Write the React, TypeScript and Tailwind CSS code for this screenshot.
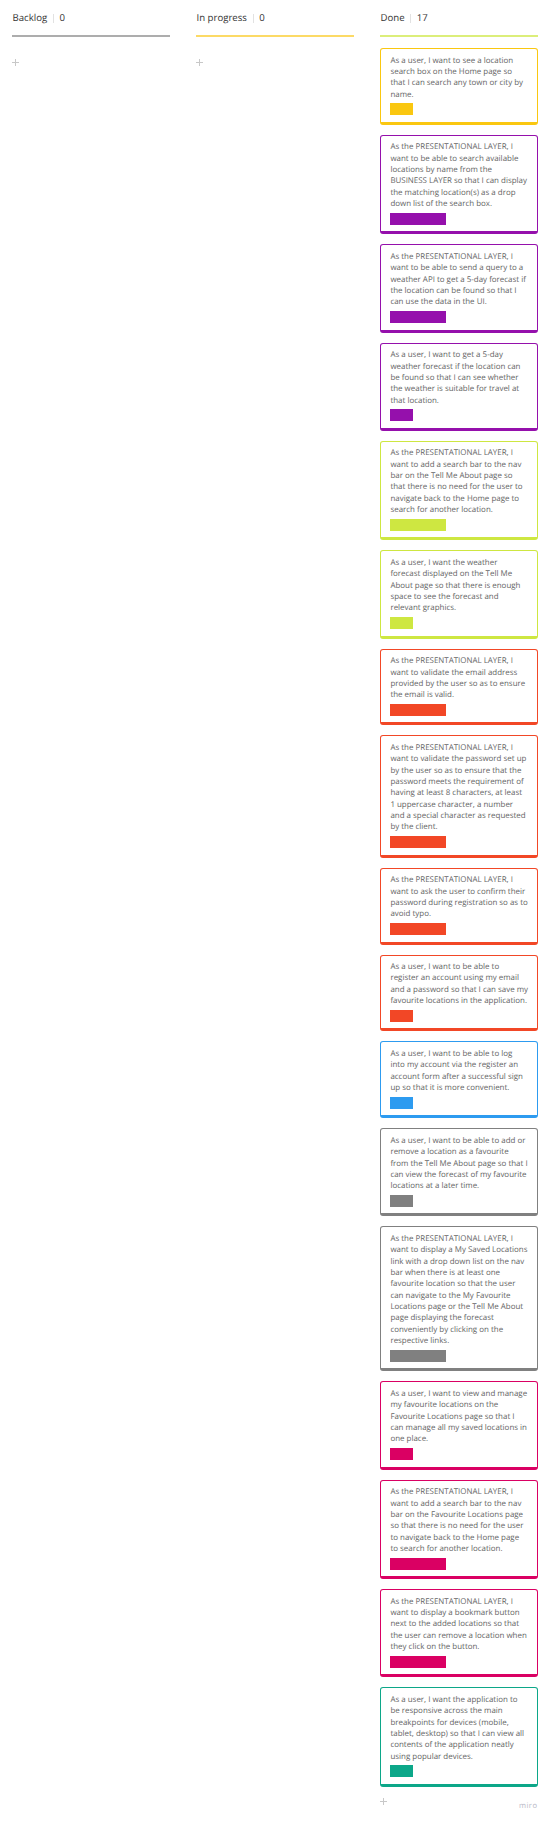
type Story = { color: string; wide?: boolean; lines: string[] };

const YELLOW = 'border-[#fac710] [--c:#fac710]';
const PURPLE = 'border-[#9510ac] [--c:#9510ac]';
const LIME = 'border-[#cee741] [--c:#cee741]';
const RED = 'border-[#f24726] [--c:#f24726]';
const BLUE = 'border-[#2d9bf0] [--c:#2d9bf0]';
const GRAY = 'border-[#808080] [--c:#808080]';
const PINK = 'border-[#da0063] [--c:#da0063]';
const GREEN = 'border-[#0ca789] [--c:#0ca789]';

const stories: Story[] = [
  { color: YELLOW, lines: ['As a user, I want to see a location', 'search box on the Home page so', 'that I can search any town or city by', 'name.'] },
  { color: PURPLE, wide: true, lines: ['As the PRESENTATIONAL LAYER, I', 'want to be able to search available', 'locations by name from the', 'BUSINESS LAYER so that I can display', 'the matching location(s) as a drop', 'down list of the search box.'] },
  { color: PURPLE, wide: true, lines: ['As the PRESENTATIONAL LAYER, I', 'want to be able to send a query to a', 'weather API to get a 5-day forecast if', 'the location can be found so that I', 'can use the data in the UI.'] },
  { color: PURPLE, lines: ['As a user, I want to get a 5-day', 'weather forecast if the location can', 'be found so that I can see whether', 'the weather is suitable for travel at', 'that location.'] },
  { color: LIME, wide: true, lines: ['As the PRESENTATIONAL LAYER, I', 'want to add a search bar to the nav', 'bar on the Tell Me About page so', 'that there is no need for the user to', 'navigate back to the Home page to', 'search for another location.'] },
  { color: LIME, lines: ['As a user, I want the weather', 'forecast displayed on the Tell Me', 'About page so that there is enough', 'space to see the forecast and', 'relevant graphics.'] },
  { color: RED, wide: true, lines: ['As the PRESENTATIONAL LAYER, I', 'want to validate the email address', 'provided by the user so as to ensure', 'the email is valid.'] },
  { color: RED, wide: true, lines: ['As the PRESENTATIONAL LAYER, I', 'want to validate the password set up', 'by the user so as to ensure that the', 'password meets the requirement of', 'having at least 8 characters, at least', '1 uppercase character, a number', 'and a special character as requested', 'by the client.'] },
  { color: RED, wide: true, lines: ['As the PRESENTATIONAL LAYER, I', 'want to ask the user to confirm their', 'password during registration so as to', 'avoid typo.'] },
  { color: RED, lines: ['As a user, I want to be able to', 'register an account using my email', 'and a password so that I can save my', 'favourite locations in the application.'] },
  { color: BLUE, lines: ['As a user, I want to be able to log', 'into my account via the register an', 'account form after a successful sign', 'up so that it is more convenient.'] },
  { color: GRAY, lines: ['As a user, I want to be able to add or', 'remove a location as a favourite', 'from the Tell Me About page so that I', 'can view the forecast of my favourite', 'locations at a later time.'] },
  { color: GRAY, wide: true, lines: ['As the PRESENTATIONAL LAYER, I', 'want to display a My Saved Locations', 'link with a drop down list on the nav', 'bar when there is at least one', 'favourite location so that the user', 'can navigate to the My Favourite', 'Locations page or the Tell Me About', 'page displaying the forecast', 'conveniently by clicking on the', 'respective links.'] },
  { color: PINK, lines: ['As a user, I want to view and manage', 'my favourite locations on the', 'Favourite Locations page so that I', 'can manage all my saved locations in', 'one place.'] },
  { color: PINK, wide: true, lines: ['As the PRESENTATIONAL LAYER, I', 'want to add a search bar to the nav', 'bar on the Favourite Locations page', 'so that there is no need for the user', 'to navigate back to the Home page', 'to search for another location.'] },
  { color: PINK, wide: true, lines: ['As the PRESENTATIONAL LAYER, I', 'want to display a bookmark button', 'next to the added locations so that', 'the user can remove a location when', 'they click on the button.'] },
  { color: GREEN, lines: ['As a user, I want the application to', 'be responsive across the main', 'breakpoints for devices (mobile,', 'tablet, desktop) so that I can view all', 'contents of the application neatly', 'using popular devices.'] },
];

function Plus() {
  return (
    <svg className="block size-[7px]" viewBox="0 0 7 7" fill="none" stroke="#c8c8c8">
      <path d="M3.5 0v7M0 3.5h7" />
    </svg>
  );
}

function Header({ title, count, line }: { title: string; count: number; line: string }) {
  return (
    <header className="flex h-[37px] flex-col justify-between">
      <div className="flex h-[35px] items-center gap-[5.6px] pt-[1px] pl-[0.5px] text-[9.65px] text-[#333]">
        <span>{title}</span>
        <span className="h-[9px] w-px bg-[#e2e2e2]" />
        <span>{count}</span>
      </div>
      <div className={`h-[2px] shrink-0 ${line}`} />
    </header>
  );
}

function Card({ story }: { story: Story }) {
  return (
    <article className={`rounded-[3px] border border-b-[3px] pt-[6.6px] pb-[6.6px] pl-[9.4px] ${story.color}`}>
      <p className="text-[7.95px] leading-[11.35px] whitespace-nowrap text-[#666]">
        {story.lines.map((line) => (
          <span key={line} className="block">{line}</span>
        ))}
      </p>
      <div className={`mt-[2.3px] h-[12px] bg-[var(--c)] ${story.wide ? 'w-[56px]' : 'w-[23px]'}`} />
    </article>
  );
}

export default function App() {
  return (
    <main className="flex h-[1821px] w-[549px] gap-[26.5px] overflow-hidden bg-white pl-[12px] font-['Open_Sans','Noto_Sans',sans-serif] [text-rendering:geometricPrecision]">
      <section className="w-[157.5px] shrink-0">
        <Header title="Backlog" count={0} line="bg-[#adadad]" />
        <div className="pt-[22px]"><Plus /></div>
      </section>
      <section className="w-[157.5px] shrink-0">
        <Header title="In progress" count={0} line="bg-[#fcda66]" />
        <div className="pt-[22px]"><Plus /></div>
      </section>
      <section className="w-[157.5px] shrink-0">
        <Header title="Done" count={17} line="bg-[#dcee7a]" />
        <div className="flex flex-col gap-[10px] pt-[11px]">
          {stories.map((story, i) => <Card key={i} story={story} />)}
        </div>
        <div className="flex justify-between pt-[11.5px]">
          <Plus />
          <span className="pt-[2px] text-[7.6px] leading-[12px] tracking-[0.5px] text-[#b9b9c8]">miro</span>
        </div>
      </section>
    </main>
  );
}
